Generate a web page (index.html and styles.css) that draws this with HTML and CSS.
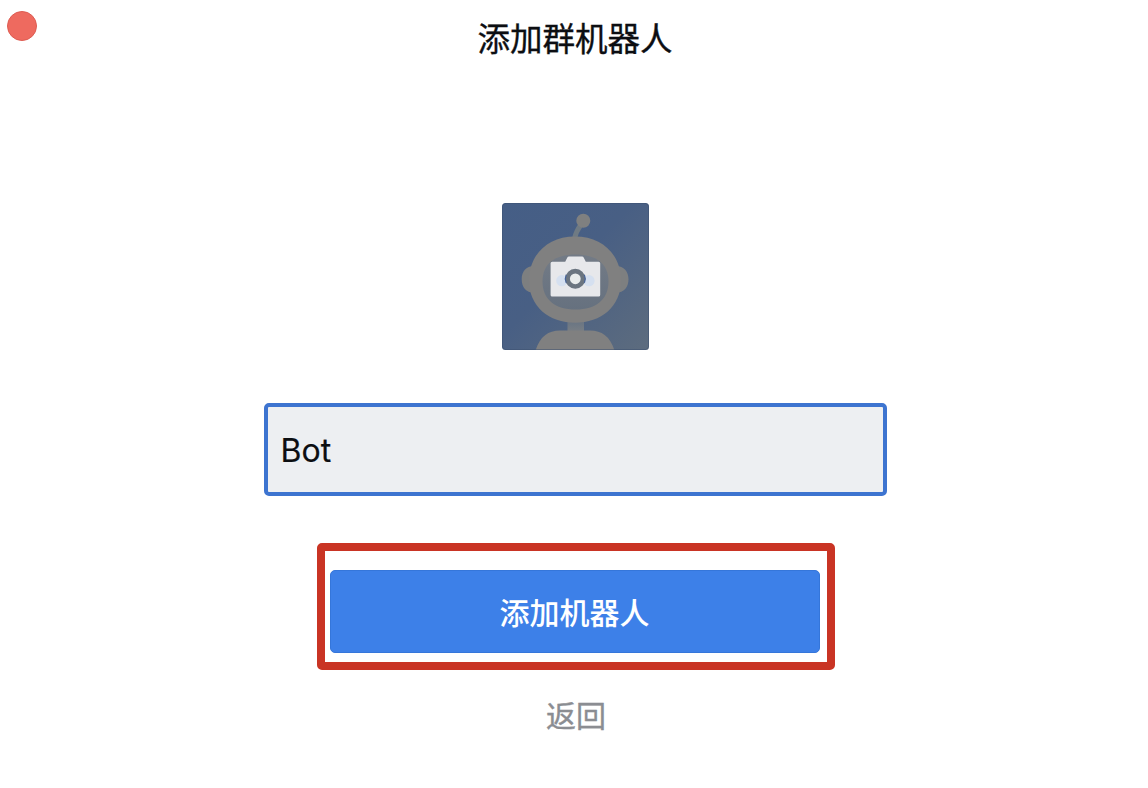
FILE: index.html
```html
<!DOCTYPE html>
<html lang="zh-CN">
<head>
<meta charset="utf-8">
<title>添加群机器人</title>
<link rel="stylesheet" href="styles.css">
</head>
<body>
<main class="dialog">
  <header class="titlebar">
    <span class="close"></span>
    <h1 class="title">添加群机器人</h1>
    <span></span>
  </header>
  <div class="avatar">
    <svg viewBox="0 0.500 147 147" width="147" height="147">
      <defs>
        <linearGradient id="sky" x1="0" y1="0" x2="1" y2="1">
          <stop offset="0" stop-color="#455e86"/>
          <stop offset=".45" stop-color="#485f84"/>
          <stop offset="1" stop-color="#5d6c7e"/>
        </linearGradient>
        <linearGradient id="stem" x1="0" y1="0" x2="0" y2="1">
          <stop offset="0" stop-color="#667383"/>
          <stop offset="1" stop-color="#7a7f84"/>
        </linearGradient>
        <linearGradient id="visor" x1="0" y1="0" x2="0" y2="1">
          <stop offset="0" stop-color="#737b86"/>
          <stop offset="1" stop-color="#66717f"/>
        </linearGradient>
      </defs>
      <rect width="147" height="148" fill="url(#sky)"/>
      <path d="M79 22Q74 29 72.500 36" stroke="#6f7a83" stroke-width="5" fill="none"/>
      <circle cx="81.300" cy="18.300" r="7" fill="#7f8080"/>
      <path d="M65.500 117H82V130H65.500Z" fill="url(#stem)"/>
      <path d="M32 63.500C24 63.500 19.700 69 19.700 76.800S24 90.200 32 90.200ZM114 63.500C122 63.500 126.500 69 126.500 76.800S122 90.200 114 90.200Z" fill="#7d7f80"/>
      <path d="M73 34C101 34 119 53 119 78C119 104 99 120.300 73 120.300S27 104 27 78C27 53 45 34 73 34Z" fill="#808080"/>
      <path d="M73.500 52C94 52 106.500 61 106.500 79C106.500 97 94 107 73.500 107S40.500 97 40.500 79C40.500 61 53 52 73.500 52Z" fill="url(#visor)"/>
      <path d="M33.500 148C38 134 46 128 58 128H88C100 128 108 134 112.500 148Z" fill="#808080"/>
      <path d="M50.200 59.200H63.200L65.200 55.200Q65.800 54 67 54H80Q81.200 54 81.800 55.200L83.800 59.200H96.600Q98.200 59.200 98.200 60.800V92.400Q98.200 94 96.600 94H50.200Q48.600 94 48.600 92.400V60.800Q48.600 59.200 50.200 59.200Z" fill="#e7e8eb"/>
      <circle cx="59.800" cy="78.200" r="5.600" fill="#d5e0f0"/>
      <circle cx="87" cy="78.200" r="5.600" fill="#d5e0f0"/>
      <circle cx="73.300" cy="76.300" r="7.700" fill="#e9ecec" stroke="#6b7580" stroke-width="4.600"/>
      <path d="M64.200 72.300A10 10 0 0 0 64.200 80.300M82.400 72.300A10 10 0 0 1 82.400 80.300" fill="none" stroke="#466398" stroke-width="1.200"/>
      <rect x=".5" y="1" width="146" height="146" rx="3" fill="none" stroke="#3c5070" stroke-opacity=".5"/>
    </svg>
  </div>
  <input class="name" type="text" value="Bot" aria-label="名称">
  <div class="highlight">
    <button class="submit" type="button">添加机器人</button>
  </div>
  <button class="back" type="button">返回</button>
</main>
</body>
</html>
```
FILE: styles.css
```css
* {
  box-sizing: border-box;
}

body {
  margin: 0;
  background: #fff;
  color: #0c0e12;
  font-family: Inter, "Noto Sans CJK SC", sans-serif;
}

.dialog {
  display: flex;
  flex-direction: column;
  align-items: center;
  width: 1148px;
  height: 788px;
  padding-left: 2px;
  overflow: hidden;
}

.titlebar {
  display: grid;
  grid-template-columns: 1fr auto 1fr;
  align-self: stretch;
  height: 203px;
  padding-top: 10px;
}

.close {
  width: 30px;
  height: 30px;
  margin: 1px 0 0 5px;
  border: 1px solid #de5c52;
  border-radius: 50%;
  background: #ee6a5f;
}

.title {
  height: 54px;
  margin: 0;
  font: 400 32.5px/54px "Noto Sans CJK SC", sans-serif;
  -webkit-text-stroke: 0.35px currentColor;
}

.avatar {
  flex: none;
  width: 147px;
  height: 147px;
  border-radius: 3.5px;
  overflow: hidden;
}

.avatar svg {
  display: block;
}

.name {
  flex: none;
  width: 623px;
  height: 93px;
  margin: 53px 0 0;
  padding: 2px 13px 0;
  border: 4px solid #3d74d0;
  border-radius: 5px;
  outline: none;
  background: #edeff2;
  color: #0c0e12;
  font: 400 32px Inter, "Noto Sans CJK SC", sans-serif;
  -webkit-text-stroke: 0.2px currentColor;
}

.highlight {
  flex: none;
  width: 518px;
  height: 127px;
  margin: 47px 0 0 2px;
  padding: 19px 6px 8px 5px;
  border: 8px solid #c93424;
  border-radius: 5px;
}

.submit {
  display: block;
  width: 490px;
  height: 83px;
  padding: 0 1px 2px 0;
  border: 1px solid #3576da;
  border-radius: 5px;
  background: #3d80e8;
  color: #fff;
  font: 500 30px/1 "Noto Sans CJK SC", sans-serif;
}

.back {
  margin: 22px 0 0 2px;
  padding: 0;
  border: 0;
  background: none;
  color: #8b8d92;
  font: 400 30px/44px "Noto Sans CJK SC", sans-serif;
  -webkit-text-stroke: 0.35px currentColor;
}
```
